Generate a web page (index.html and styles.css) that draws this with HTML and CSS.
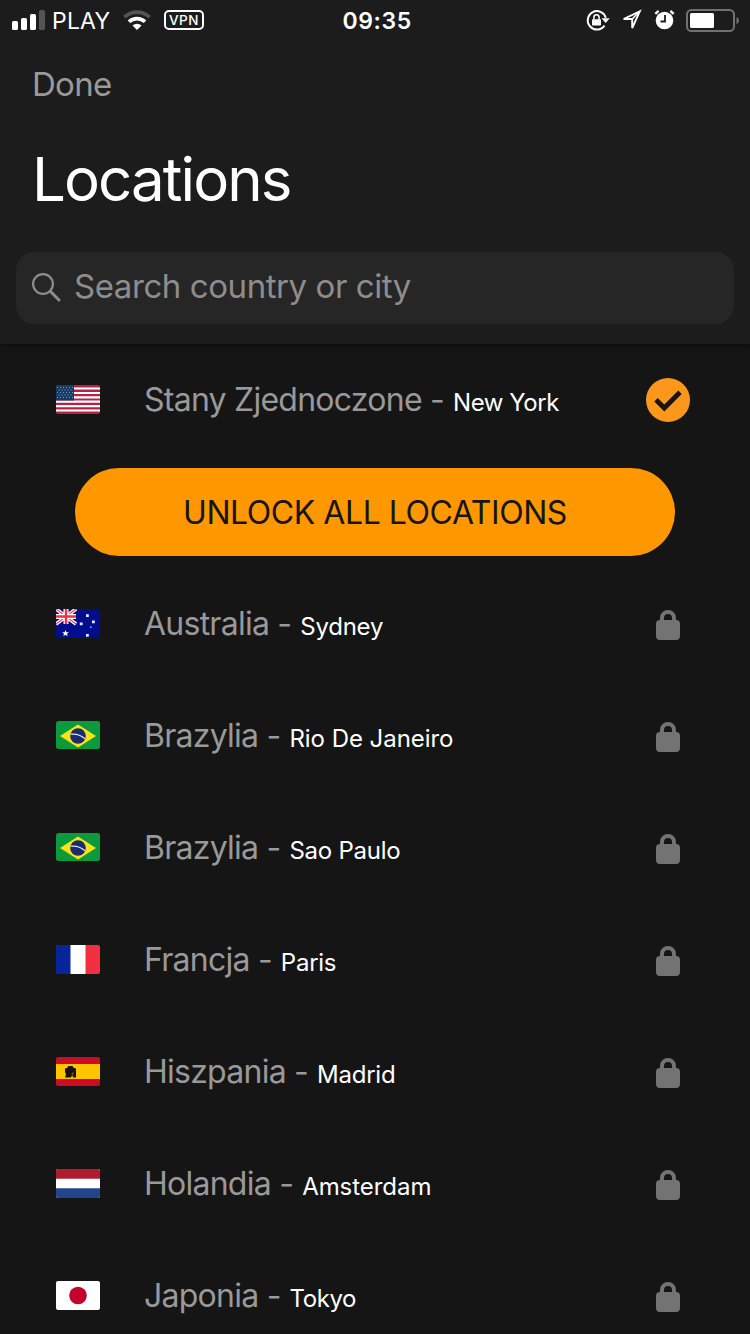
FILE: index.html
```html
<!DOCTYPE html>
<html lang="en">
<head>
<meta charset="utf-8">
<title>Locations</title>
<link rel="stylesheet" href="styles.css">
</head>
<body>
<svg class="defs" width="0" height="0" aria-hidden="true">
  <defs>
    <symbol id="lock" viewBox="0 0 24 30">
      <path d="M6 12V8a6 6 0 0 1 12 0V12" fill="none" stroke="#737373" stroke-width="4"/>
      <rect x="0" y="10" width="24" height="20" rx="4" fill="#737373"/>
    </symbol>
    <symbol id="brazil" viewBox="0 0 44 28">
      <rect width="44" height="28" rx="2.5" fill="#0b9a3c"/>
      <path d="M22 3.5 40 15 22 26.5 4 15z" fill="#f8e416"/>
      <circle cx="22" cy="15" r="7.8" fill="#1b2b6e"/>
      <path d="M14.6 13.2q8-1 14.4 4.500" fill="none" stroke="#dfe8ee" stroke-width="1.3"/>
    </symbol>
  </defs>
</svg>
<header class="header">
  <div class="status">
    <svg class="signal" width="34" height="20" viewBox="0 0 34 20">
      <rect x="0" y="11" width="6" height="9" rx="1.6" fill="#fff"/>
      <rect x="9" y="8" width="6" height="12" rx="1.6" fill="#fff"/>
      <rect x="18" y="4" width="6" height="16" rx="1.6" fill="#fff"/>
      <rect x="27" y="0" width="6" height="20" rx="1.6" fill="#545454"/>
    </svg>
    <span class="carrier">PLAY</span>
    <svg class="wifi" width="28" height="20" viewBox="0 0 28 20">
      <path d="M1.4 7.2a18.2 18.2 0 0 1 25.200 0" fill="none" stroke="#545454" stroke-width="3.8"/>
      <path d="M6 11.8a11.600 11.600 0 0 1 16 0" fill="none" stroke="#fff" stroke-width="3.6"/>
      <path d="M9.5 15.400a6.600 6.600 0 0 1 9 0L14 20z" fill="#fff"/>
    </svg>
    <span class="vpn">VPN</span>
    <span class="clock">09:35</span>
    <div class="status-right">
      <svg width="24" height="24" viewBox="0 0 24 24">
        <path d="M18.500 17.600A9.200 9.200 0 1 1 19.800 9.800" fill="none" stroke="#fff" stroke-width="2"/>
        <path d="M15.500 10.200h8.200l-4 4.800z" fill="#fff"/>
        <rect x="6" y="11.200" width="9" height="6.300" rx=".8" fill="#fff"/>
        <path d="M7.900 11.500V9.400a2.600 2.600 0 0 1 5.200 0v2.100" fill="none" stroke="#fff" stroke-width="1.500"/>
      </svg>
      <svg class="arrow" width="22" height="22" viewBox="0 0 22 22">
        <path d="M18.800 2.300 2.600 10h8.600v9z" fill="none" stroke="#fff" stroke-width="1.900"/>
        <path d="M18.500 2.500 11.200 10" stroke="#fff" stroke-width="1.600"/>
      </svg>
      <svg class="alarm" width="22" height="22" viewBox="0 0 22 22">
        <circle cx="10.500" cy="11.500" r="8.800" fill="#fff"/>
        <path d="M1.300 4.800 4.600 1.800M16.400 1.800l3.300 3" stroke="#fff" stroke-width="2.300"/>
        <path d="M11 6v6.500H6.500" fill="none" stroke="#1c1c1c" stroke-width="1.800"/>
      </svg>
      <svg class="battery" width="54" height="24" viewBox="0 0 54 24">
        <rect x="1" y="1" width="47" height="21" rx="4.500" fill="none" stroke="#717171" stroke-width="2"/>
        <rect x="4" y="4" width="24" height="15" rx="1.500" fill="#fff"/>
        <path d="M50.500 8q2.500 1 2.500 3.500t-2.500 3.500z" fill="#717171"/>
      </svg>
    </div>
  </div>
  <div class="done">Done</div>
  <h1 class="title">Locations</h1>
  <div class="search">
    <svg class="glass" width="30" height="30" viewBox="0 0 30 30">
      <circle cx="11" cy="11" r="9.900" fill="none" stroke="#8d8d8d" stroke-width="2.200"/>
      <path d="M18.400 18.400 27 27" stroke="#8d8d8d" stroke-width="2.900" stroke-linecap="round"/>
    </svg>
    <span class="placeholder">Search country or city</span>
  </div>
</header>
<main class="list">
  <div class="row">
    <svg class="flag" width="44" height="29" viewBox="0 0 44 29">
      <rect width="44" height="29" rx="2" fill="#b42345"/>
      <path d="M0 3.500h44M0 8h44M0 12.300h44M0 16.700h44M0 21.100h44M0 25.500h44" stroke="#fff" stroke-width="2.200"/>
      <path d="M2 0h16v15.600H0V2a2 2 0 0 1 2-2z" fill="#183b63"/>
      <path d="M1 2.500h16M2.500 5h14M1 7.500h16M2.500 10h14M1 12.500h16" stroke="#8098b3" stroke-width="1" stroke-dasharray="1 2"/>
    </svg>
    <div class="place"><span class="country">Stany Zjednoczone -</span><span class="city tight">New York</span></div>
    <svg class="check" width="44" height="44" viewBox="0 0 44 44">
      <circle cx="22" cy="22" r="22" fill="#fb981c"/>
      <path d="m10 21.700 8.300 8.300L34 14.300" fill="none" stroke="#181511" stroke-width="4.800"/>
    </svg>
  </div>
  <div class="unlock-wrap"><div class="unlock">UNLOCK ALL LOCATIONS</div></div>
  <div class="row">
    <svg class="flag" width="44" height="29" viewBox="0 0 44 29">
      <rect width="44" height="29" rx="2" fill="#000d8c"/>
      <path d="M0 0 20 15M20 0 0 15" stroke="#fff" stroke-width="3.600"/>
      <path d="M0 0 20 15M20 0 0 15" stroke="#f04a55" stroke-width="1.300"/>
      <path d="M10 0v15M0 7.500h20" stroke="#fff" stroke-width="5"/>
      <path d="M10 0v15M0 7.500h20" stroke="#f22f3d" stroke-width="2.400"/>
      <path d="m9.500 21 .9 2.300 2.500-.1-1.900 1.600.7 2.400-2.200-1.400-2.200 1.400.7-2.400-1.900-1.600 2.500.1z" fill="#fff"/>
      <path d="M30 5.200h2.800V8H30zM36 11.500h2.800v2.800H36zM23.800 13.500h2.800v2.800h-2.800zM30 25h2.800v2.800H30z" fill="#e5e9ff"/>
      <rect x="34" y="17.500" width="1.500" height="1.500" fill="#aab2ee"/>
    </svg>
    <div class="place"><span class="country">Australia -</span><span class="city">Sydney</span></div>
    <svg class="lock" width="24" height="30"><use href="#lock"/></svg>
  </div>
  <div class="row">
    <svg class="flag brazil" width="44" height="28"><use href="#brazil"/></svg>
    <div class="place"><span class="country">Brazylia -</span><span class="city wide">Rio De Janeiro</span></div>
    <svg class="lock" width="24" height="30"><use href="#lock"/></svg>
  </div>
  <div class="row">
    <svg class="flag brazil" width="44" height="28"><use href="#brazil"/></svg>
    <div class="place"><span class="country">Brazylia -</span><span class="city">Sao Paulo</span></div>
    <svg class="lock" width="24" height="30"><use href="#lock"/></svg>
  </div>
  <div class="row">
    <svg class="flag" width="44" height="29" viewBox="0 0 44 29">
      <rect width="44" height="29" rx="2" fill="#f22f40"/>
      <path d="M2 0h13v29H2a2 2 0 0 1-2-2V2a2 2 0 0 1 2-2z" fill="#06259a"/>
      <rect x="14.500" width="15" height="29" fill="#fff"/>
    </svg>
    <div class="place"><span class="country">Francja -</span><span class="city">Paris</span></div>
    <svg class="lock" width="24" height="30"><use href="#lock"/></svg>
  </div>
  <div class="row">
    <svg class="flag" width="44" height="29" viewBox="0 0 44 29">
      <rect width="44" height="29" rx="2" fill="#c90d24"/>
      <rect y="7" width="44" height="15" fill="#ffc400"/>
      <path d="M9 11.500 11 11l1.500-2h4l1 1.800 2.500.7v9h-3l-.5-2-2 2H9l1-3L9 15z" fill="#17130a"/>
      <path d="m15.500 17.500 1.500-2v4" stroke="#94721a" stroke-width=".8" fill="none"/>
    </svg>
    <div class="place"><span class="country">Hiszpania -</span><span class="city">Madrid</span></div>
    <svg class="lock" width="24" height="30"><use href="#lock"/></svg>
  </div>
  <div class="row">
    <svg class="flag" width="44" height="29" viewBox="0 0 44 29">
      <rect width="44" height="29" rx="2" fill="#fff"/>
      <path d="M0 9.700V2a2 2 0 0 1 2-2h40a2 2 0 0 1 2 2v7.700z" fill="#ae1c2d"/>
      <path d="M0 19.300V27a2 2 0 0 0 2 2h40a2 2 0 0 0 2-2v-7.700z" fill="#21468b"/>
    </svg>
    <div class="place"><span class="country">Holandia -</span><span class="city wide">Amsterdam</span></div>
    <svg class="lock" width="24" height="30"><use href="#lock"/></svg>
  </div>
  <div class="row">
    <svg class="flag" width="44" height="29" viewBox="0 0 44 29">
      <rect width="44" height="29" rx="2" fill="#fff"/>
      <circle cx="22" cy="14.500" r="8.800" fill="#c4002d"/>
    </svg>
    <div class="place"><span class="country">Japonia -</span><span class="city tight">Tokyo</span></div>
    <svg class="lock" width="24" height="30"><use href="#lock"/></svg>
  </div>
</main>
</body>
</html>
```

FILE: styles.css
```css
* { box-sizing: border-box; }
body {
  margin: 0;
  width: 750px;
  height: 1334px;
  overflow: hidden;
  background: #151515;
  color: #fff;
  font-family: Inter, "Liberation Sans", sans-serif;
}
.defs { display: block; height: 0; }
.header {
  height: 344px;
  background: #1c1c1c;
  box-shadow: 0 1px 5px rgba(0, 0, 0, .5);
}
.status {
  display: flex;
  align-items: center;
  height: 40px;
  padding-left: 12px;
  line-height: 40px;
  white-space: nowrap;
}
.carrier { width: 64px; margin-left: 6px; padding-top: 2px; font-size: 23px; letter-spacing: .2px; }
.wifi { margin-left: 7px; }
.vpn {
  width: 40px;
  height: 20px;
  margin-left: 13px;
  border: 2px solid #fff;
  border-radius: 5px;
  font-size: 13.5px;
  font-weight: 500;
  letter-spacing: .5px;
  line-height: 17px;
  text-align: center;
}
.clock {
  width: 80px;
  margin-left: 138.5px;
  padding-top: 2px;
  font-size: 23px;
  font-weight: 600;
  letter-spacing: .6px;
}
.status-right { display: flex; align-items: center; margin-left: 163.5px; }
.arrow { margin-left: 11px; }
.alarm { margin-left: 11px; }
.battery { margin: 2px 0 0 10px; }
.done {
  height: 90px;
  padding-left: 32px;
  color: #999;
  font-size: 33px;
  letter-spacing: -.7px;
  line-height: 88px;
}
.title {
  height: 122px;
  margin: 0;
  padding-left: 32px;
  font-size: 60px;
  font-weight: 400;
  letter-spacing: -1.9px;
  line-height: 98px;
}
.search {
  display: flex;
  align-items: center;
  height: 72px;
  margin: 0 16px;
  padding-left: 16px;
  border-radius: 18px;
  background: #262626;
}
.placeholder {
  margin-left: 12px;
  padding-bottom: 3px;
  color: #8d8d8d;
  font-size: 33px;
  letter-spacing: -.43px;
  line-height: 69px;
}
.list { display: flex; flex-direction: column; }
.row {
  display: flex;
  flex: none;
  align-items: center;
  height: 112px;
  padding: 0 70px 0 56px;
}
.flag { flex: none; margin-bottom: 1px; }
.brazil { margin-bottom: 2px; }
.place {
  display: flex;
  flex: 1;
  align-items: baseline;
  margin-left: 44px;
  padding-bottom: 2px;
  white-space: nowrap;
}
.country { color: #999; font-size: 32px; letter-spacing: -.75px; }
.city { margin-left: 9px; font-size: 24px; letter-spacing: -.25px; }
.tight { letter-spacing: -.45px; }
.wide { letter-spacing: -.05px; }
.check { margin-right: -10px; }
.lock { margin-top: 2px; }
.unlock-wrap { height: 112px; padding: 12px 75px; }
.unlock {
  height: 88px;
  border-radius: 44px;
  background: #ff9800;
  color: #181510;
  font-size: 32px;
  letter-spacing: -.45px;
  line-height: 89px;
  text-align: center;
}
```
